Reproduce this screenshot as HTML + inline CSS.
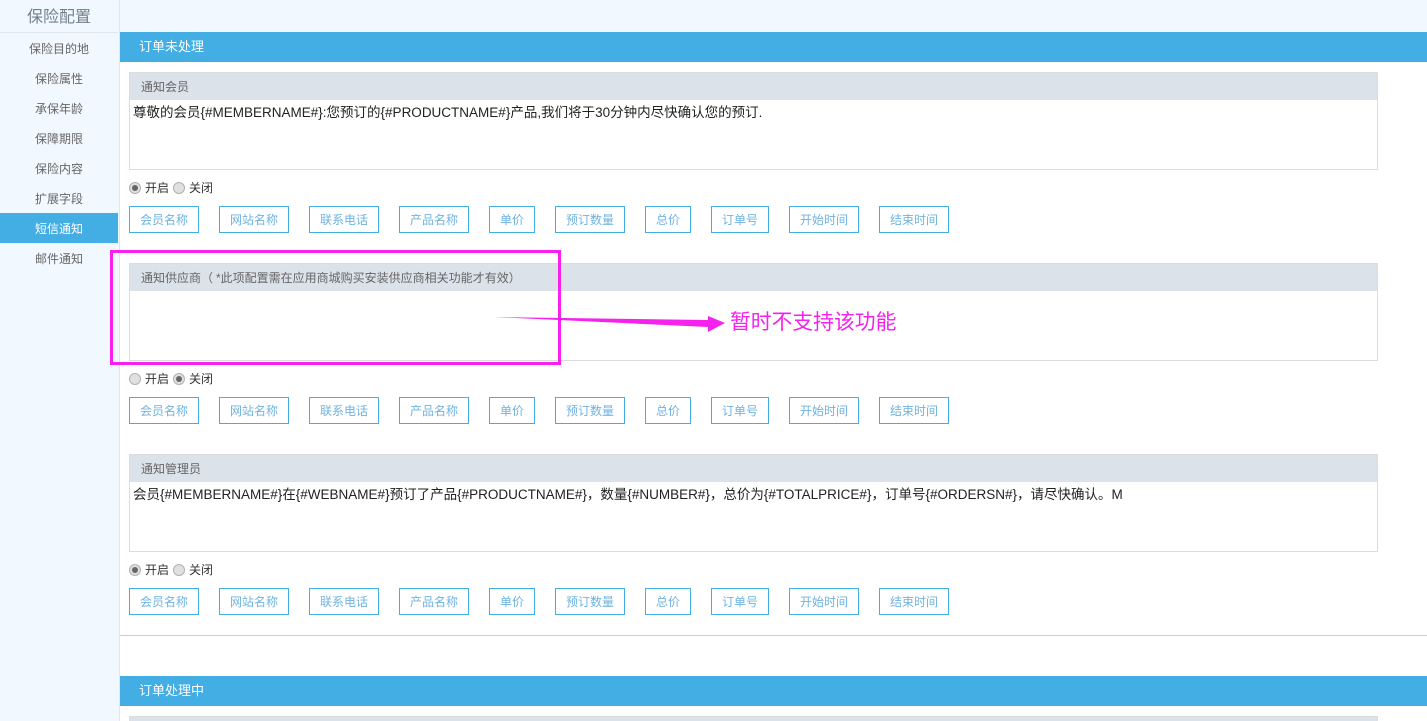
<!DOCTYPE html>
<html lang="zh"><head><meta charset="utf-8"><title>保险配置</title>
<style>
*{box-sizing:border-box}
html,body{margin:0;padding:0;width:1427px;height:721px;overflow:hidden;background:#fff;font-family:"Liberation Sans","Noto Sans CJK SC",sans-serif;font-size:12px;color:#333}
.a{position:absolute;white-space:nowrap}
#side{left:0;top:0;width:120px;height:721px;background:#f1f8ff;border-right:1px solid #dfe6ee}
.title{left:0;top:0;width:118px;height:33px;line-height:35px;text-align:center;font-size:16px;color:#72808e;border-bottom:1px solid #dfe6ee}
.m{left:0;width:118px;height:30px;line-height:32px;text-align:center;color:#666}
.m.on{background:#42aee4;color:#fff}
.bar{left:120px;width:1307px;height:30px;line-height:30px;padding-left:19px;background:#42aee4;color:#fff;font-size:13px}
.p{left:129px;width:1249px;height:98px;border:1px solid #dcdcdc;background:#fff}
.h{position:absolute;left:0;top:0;right:0;height:27px;line-height:29px;padding-left:11px;background:#dbe2e9;color:#666}
.t{position:absolute;left:3px;top:31px;line-height:18px;color:#222;font-size:13.5px}
.b{height:27px;line-height:26px;border:1px solid #42aee4;color:#6fb3e0;text-align:center;background:#fff}
.r{width:12px;height:12px;border-radius:50%;border:1px solid #b0b0b0;background:#e0e0e0}
.r.c:after{content:"";position:absolute;left:2px;top:2px;width:6px;height:6px;border-radius:50%;background:#666}
.l{color:#333;line-height:16px}
</style></head><body>
<div class="a" style="left:120px;top:0;width:1307px;height:32px;background:#f2f8ff"></div>
<div class="a" id="side"></div>
<div class="a title">保险配置</div>
<div class="a m" style="top:33px">保险目的地</div>
<div class="a m" style="top:63px">保险属性</div>
<div class="a m" style="top:93px">承保年龄</div>
<div class="a m" style="top:123px">保障期限</div>
<div class="a m" style="top:153px">保险内容</div>
<div class="a m" style="top:183px">扩展字段</div>
<div class="a m on" style="top:213px">短信通知</div>
<div class="a m" style="top:243px">邮件通知</div>

<div class="a bar" style="top:32px">订单未处理</div>

<div class="a p" style="top:72px"><div class="h">通知会员</div><div class="t">尊敬的会员{#MEMBERNAME#}:您预订的{#PRODUCTNAME#}产品,我们将于30分钟内尽快确认您的预订.</div></div>
<div class="a r c" style="left:129px;top:182px"></div><div class="a l" style="left:145px;top:180px">开启</div>
<div class="a r" style="left:173px;top:182px"></div><div class="a l" style="left:189px;top:180px">关闭</div>
<div class="a b" style="left:129px;top:206px;width:70px">会员名称</div>
<div class="a b" style="left:219px;top:206px;width:70px">网站名称</div>
<div class="a b" style="left:309px;top:206px;width:70px">联系电话</div>
<div class="a b" style="left:399px;top:206px;width:70px">产品名称</div>
<div class="a b" style="left:489px;top:206px;width:46px">单价</div>
<div class="a b" style="left:555px;top:206px;width:70px">预订数量</div>
<div class="a b" style="left:645px;top:206px;width:46px">总价</div>
<div class="a b" style="left:711px;top:206px;width:58px">订单号</div>
<div class="a b" style="left:789px;top:206px;width:70px">开始时间</div>
<div class="a b" style="left:879px;top:206px;width:70px">结束时间</div>

<div class="a p" style="top:263px"><div class="h">通知供应商（<span style="margin-left:3px">*此项配置需在应用商城购买安装供应商相关功能才有效</span>）</div></div>
<div class="a r" style="left:129px;top:373px"></div><div class="a l" style="left:145px;top:371px">开启</div>
<div class="a r c" style="left:173px;top:373px"></div><div class="a l" style="left:189px;top:371px">关闭</div>
<div class="a b" style="left:129px;top:397px;width:70px">会员名称</div>
<div class="a b" style="left:219px;top:397px;width:70px">网站名称</div>
<div class="a b" style="left:309px;top:397px;width:70px">联系电话</div>
<div class="a b" style="left:399px;top:397px;width:70px">产品名称</div>
<div class="a b" style="left:489px;top:397px;width:46px">单价</div>
<div class="a b" style="left:555px;top:397px;width:70px">预订数量</div>
<div class="a b" style="left:645px;top:397px;width:46px">总价</div>
<div class="a b" style="left:711px;top:397px;width:58px">订单号</div>
<div class="a b" style="left:789px;top:397px;width:70px">开始时间</div>
<div class="a b" style="left:879px;top:397px;width:70px">结束时间</div>

<div class="a p" style="top:454px"><div class="h">通知管理员</div><div class="t">会员{#MEMBERNAME#}在{#WEBNAME#}预订了产品{#PRODUCTNAME#}，数量{#NUMBER#}，总价为{#TOTALPRICE#}，订单号{#ORDERSN#}，请尽快确认。M</div></div>
<div class="a r c" style="left:129px;top:564px"></div><div class="a l" style="left:145px;top:562px">开启</div>
<div class="a r" style="left:173px;top:564px"></div><div class="a l" style="left:189px;top:562px">关闭</div>
<div class="a b" style="left:129px;top:588px;width:70px">会员名称</div>
<div class="a b" style="left:219px;top:588px;width:70px">网站名称</div>
<div class="a b" style="left:309px;top:588px;width:70px">联系电话</div>
<div class="a b" style="left:399px;top:588px;width:70px">产品名称</div>
<div class="a b" style="left:489px;top:588px;width:46px">单价</div>
<div class="a b" style="left:555px;top:588px;width:70px">预订数量</div>
<div class="a b" style="left:645px;top:588px;width:46px">总价</div>
<div class="a b" style="left:711px;top:588px;width:58px">订单号</div>
<div class="a b" style="left:789px;top:588px;width:70px">开始时间</div>
<div class="a b" style="left:879px;top:588px;width:70px">结束时间</div>

<div class="a" style="left:120px;top:635px;width:1307px;height:1px;background:#ccc"></div>
<div class="a bar" style="top:676px">订单处理中</div>
<div class="a" style="left:129px;top:716px;width:1249px;height:5px;background:#dbe2e9;border:1px solid #dcdcdc;border-bottom:0"></div>

<div class="a" style="left:110px;top:250px;width:451px;height:115px;border:3px solid #f81ff0"></div>
<svg class="a" style="left:490px;top:310px" width="240" height="26" viewBox="0 0 240 26"><path d="M4 7 L218 10 L218 6 L235 13 L218 22 L218 17 Z" fill="#f522ee"/></svg>
<div class="a" style="left:730px;top:309px;font-size:20.8px;line-height:28px;color:#f522ee">暂时不支持该功能</div>
</body></html>
